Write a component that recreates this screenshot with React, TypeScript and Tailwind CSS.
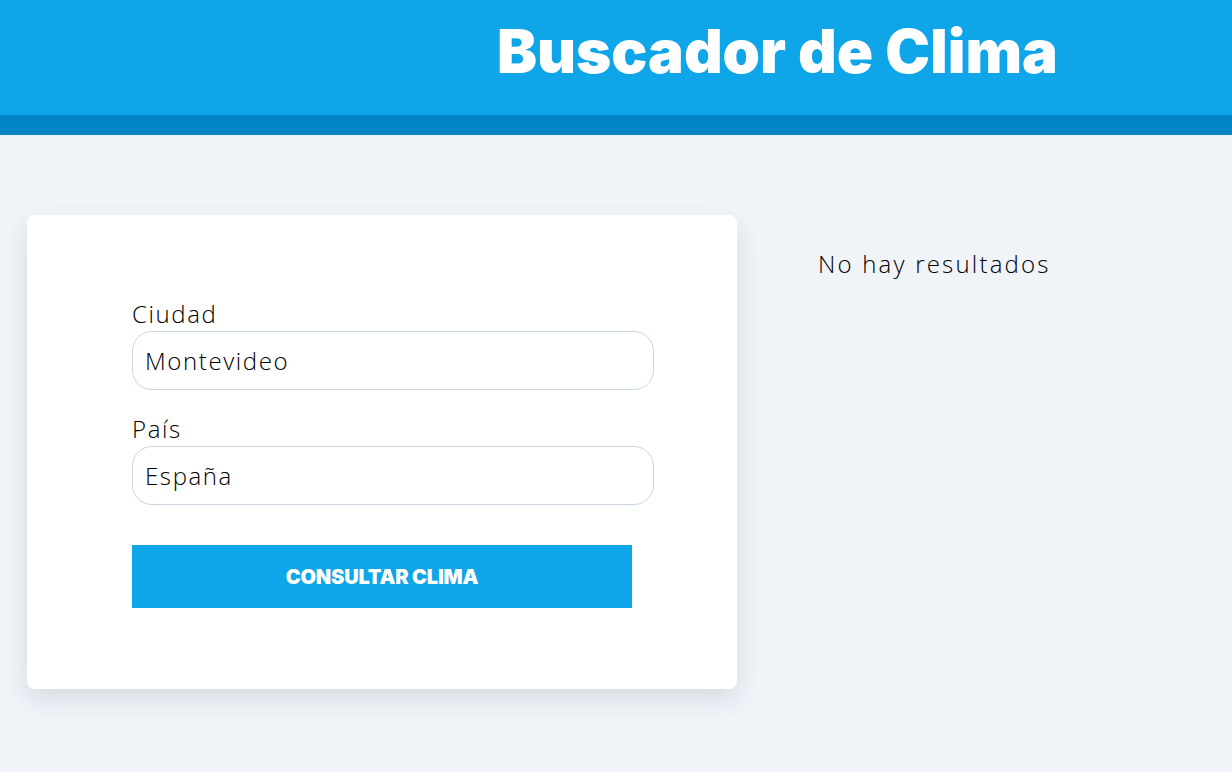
import { useState } from 'react'

export default function App() {
    const [ciudad, setCiudad] = useState('Montevideo')
    const [pais, setPais] = useState('España')

    return (
        <div className="min-h-screen bg-[#f0f4f9] font-['Open_Sans',sans-serif] text-black">
            {/* Header */}
            <header className="bg-[#0ea5e9] border-b-[20px] border-[#0284c7]">
                <h1 className="h-[115px] pl-[497px] pt-[12px] font-['Inter',sans-serif] text-[60px] font-black leading-[78px] text-white">
                    Buscador de Clima
                </h1>
            </header>

            <main className="flex items-start gap-[81px] px-[27px] pt-[80px]">
                {/* Form card */}
                <div className="w-[710px] h-[474px] bg-white rounded-lg shadow-[0_10px_25px_rgba(30,41,59,0.12)] pt-[81px] pl-[105px]">
                    <form className="w-[522px]" onSubmit={(e) => e.preventDefault()}>
                        <label className="block text-[24px] font-light leading-[35px] tracking-[1.6px]">Ciudad</label>
                        <input
                            value={ciudad}
                            onChange={(e) => setCiudad(e.target.value)}
                            className="block w-full h-[59px] px-3 rounded-[20px] border border-slate-300 text-[24px] font-light tracking-[1.6px] outline-none"
                        />

                        <label className="block mt-[21px] text-[24px] font-light leading-[35px] tracking-[1.6px]">País</label>
                        <input
                            value={pais}
                            onChange={(e) => setPais(e.target.value)}
                            className="block w-full h-[59px] px-3 rounded-[20px] border border-slate-300 text-[24px] font-light tracking-[1.6px] outline-none"
                        />

                        <button
                            type="submit"
                            className="mt-[40px] w-[500px] h-[63px] bg-[#0ea5e9] text-white font-['Inter',sans-serif] font-black text-[20px] uppercase tracking-[-0.2px]"
                        >
                            Consultar clima
                        </button>
                    </form>
                </div>

                {/* Results */}
                <div className="pt-[33px]">
                    <p className="text-[24px] font-light leading-[32px] tracking-[2.2px]">No hay resultados</p>
                </div>
            </main>
        </div>
    )
}
